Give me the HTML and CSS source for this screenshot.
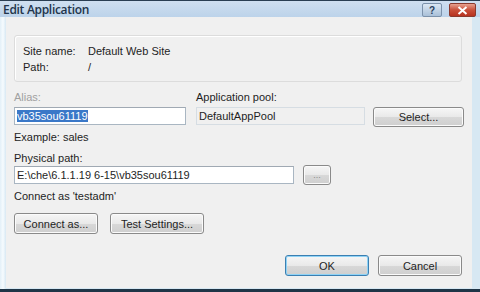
FILE: index.html
```html
<!DOCTYPE html>
<html lang="en">
<head>
  <meta charset="UTF-8">
  <title>Edit Application</title>
  <link rel="stylesheet" href="styles.css">
</head>
<body>
  <div class="window">
    <div class="titlebar">
      <span class="title">Edit Application</span>
      <div class="caption-buttons">
        <span class="cap-btn help">?</span>
        <span class="cap-btn close">
          <svg width="11" height="9" viewBox="0 0 11 9"><path d="M1.5 1 L9.5 8 M9.5 1 L1.5 8" stroke="#fff" stroke-width="2" /></svg>
        </span>
      </div>
    </div>

    <div class="client">
      <div class="site-box">
        <div class="info-row"><span class="info-label">Site name:</span><span>Default Web Site</span></div>
        <div class="info-row"><span class="info-label">Path:</span><span>/</span></div>
      </div>

      <div class="pool-grid">
        <label class="disabled">Alias:</label>
        <label>Application pool:</label>
        <span></span>
        <div class="textbox"><span class="selected">vb35sou61119</span></div>
        <div class="textbox readonly">DefaultAppPool</div>
        <button class="btn">Select...</button>
      </div>
      <div class="hint">Example: sales</div>

      <label class="path-label">Physical path:</label>
      <div class="path-row">
        <div class="textbox path-box">E:\che\6.1.1.19 6-15\vb35sou61119</div>
        <button class="btn browse">...</button>
      </div>
      <div class="connect-note">Connect as 'testadm'</div>

      <div class="button-group">
        <button class="btn connect">Connect as...</button>
        <button class="btn test">Test Settings...</button>
      </div>

      <div class="dialog-buttons">
        <button class="btn default">OK</button>
        <button class="btn">Cancel</button>
      </div>
    </div>
  </div>
</body>
</html>
```

FILE: styles.css
```css
body {
  margin: 0;
  font-family: "Liberation Sans", Arial, sans-serif;
  font-size: 11px;
  color: #1e1e1e;
  background: #cfe3ef;
}

.window {
  width: 480px;
  height: 292px;
  box-sizing: border-box;
  display: flex;
  flex-direction: column;
  background: linear-gradient(to right, #e3f0f8, #f6fbfe 3px, #d7e8f3 6px);
  border-top: 1px solid #2a3e52;
  border-bottom: 3px solid #1f3547;
}

.titlebar {
  height: 16px;
  display: flex;
  align-items: center;
  justify-content: space-between;
  background: linear-gradient(to bottom, #cfdff0, #bcd3ea);
  padding-left: 3px;
}

.title {
  font-family: "Open Sans", sans-serif;
  font-size: 12px;
  font-weight: 600;
  color: #22344a;
  letter-spacing: -0.3px;
}

.caption-buttons {
  display: flex;
  gap: 7px;
  align-self: flex-start;
  margin-top: 2px;
  margin-right: 4px;
}

.cap-btn {
  height: 12px;
  border-radius: 2px;
  display: flex;
  align-items: center;
  justify-content: center;
  border: 1px solid #7c92ab;
}

.help {
  width: 18px;
  background: linear-gradient(to bottom, #dbe7f3, #a9c0d8);
  color: #2a3f5c;
  font-weight: bold;
  font-size: 10px;
}

.close {
  width: 25px;
  border-color: #8a3a2e;
  background: linear-gradient(to bottom, #e8a290, #c9503a 50%, #b7321f);
}

.client {
  flex: 1;
  margin: 0 8px 1px 6px;
  background: #f0f0f0;
  padding: 18px 10px 0 8px;
}

.site-box {
  height: 47px;
  box-sizing: border-box;
  border: 1px solid #dcdcdc;
  border-radius: 3px;
  box-shadow: inset 1px 1px 0 #fff;
  padding: 7px 0 0 8px;
}

.info-row {
  display: flex;
  height: 16px;
  line-height: 16px;
}

.info-label {
  width: 65px;
}

.pool-grid {
  display: grid;
  grid-template-columns: 172px 169px 89px;
  column-gap: 10px;
  row-gap: 3px;
  margin-top: 8px;
  align-items: start;
}

.pool-grid .btn {
  margin-left: -2px;
  width: 91px;
  height: 20px;
}

label {
  display: block;
  line-height: 14px;
}

.disabled {
  color: #a0a0a0;
}

.textbox {
  height: 16px;
  line-height: 16px;
  border: 1px solid #a9b6c2;
  border-top-color: #a0a9b3;
  background: #fff;
  padding: 0 2px;
  white-space: nowrap;
  overflow: hidden;
}

.readonly {
  background: #f0f0f0;
  border-color: #d6dde3;
}

.selected {
  background: #3a78c8;
  color: #fff;
}

.hint {
  margin-top: 2px;
  line-height: 16px;
}

.path-label {
  margin-top: 6px;
}

.path-row {
  display: flex;
  gap: 9px;
  margin-top: 0;
  align-items: center;
}

.path-box {
  width: 274px;
}

.btn {
  font-family: "Liberation Sans", Arial, sans-serif;
  font-size: 11px;
  color: #1e1e1e;
  height: 21px;
  padding: 0;
  border: 1px solid #8a8a8a;
  border-radius: 3px;
  background: linear-gradient(to bottom, #f6f6f6, #e9e9e9 50%, #d8d8d8 51%, #cfcfcf);
  box-shadow: inset 0 0 0 1px #fbfbfb;
}

.browse {
  width: 28px;
  height: 20px;
  color: #8a8a8a;
  font-size: 9px;
}

.connect-note {
  margin-top: 3px;
  line-height: 16px;
}

.button-group {
  display: flex;
  gap: 12px;
  margin-top: 9px;
}

.connect {
  width: 84px;
}

.test {
  width: 94px;
}

.dialog-buttons {
  display: flex;
  justify-content: flex-end;
  gap: 9px;
  margin-top: 21px;
}

.dialog-buttons .btn {
  width: 84px;
}

.default {
  border-color: #3c7fb1;
  box-shadow: inset 0 0 0 1px #8fd3f6;
}
```
